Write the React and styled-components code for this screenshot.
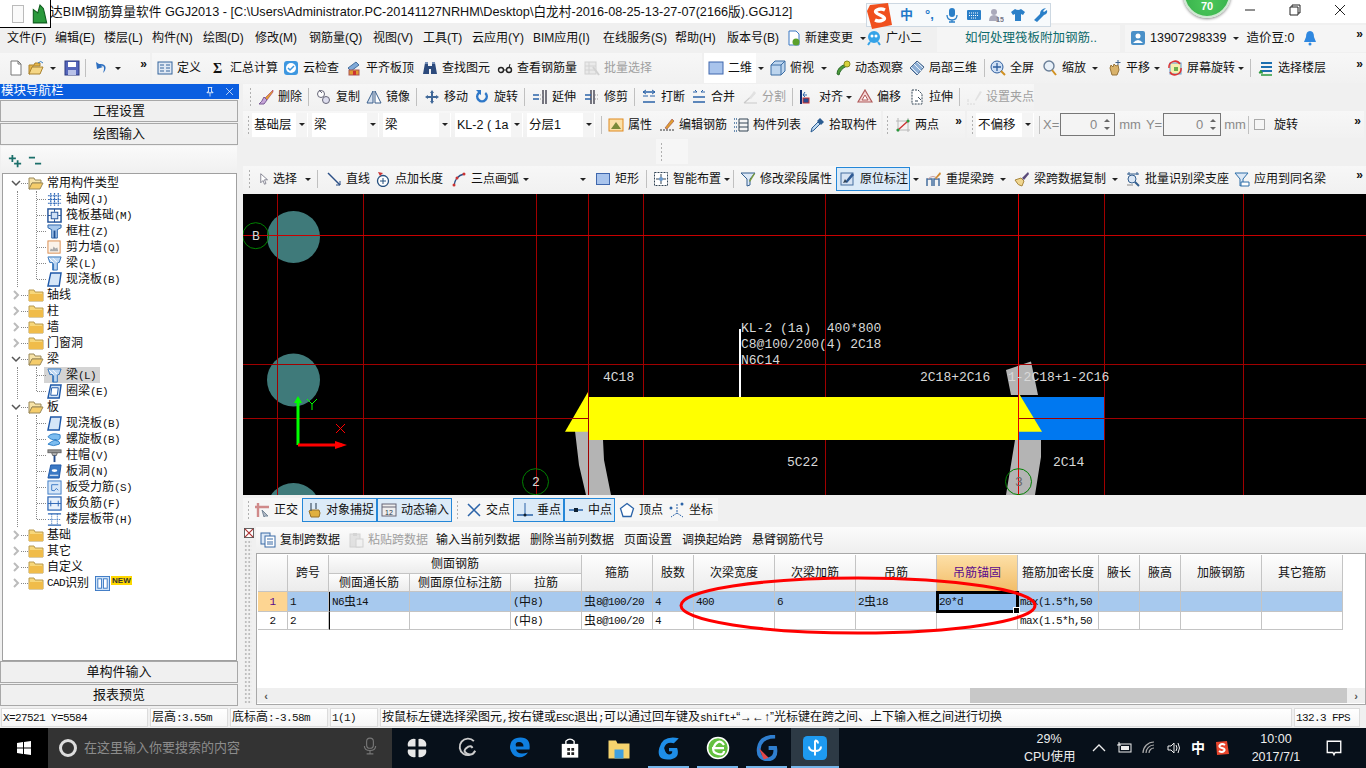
import React from "react";
import styled, { createGlobalStyle } from "styled-components";

const UI_FONT = `"Liberation Sans", "Noto Sans CJK SC", sans-serif`;
const MONO_FONT = `"Liberation Mono", "Noto Sans CJK SC", monospace`;

const GlobalStyle = createGlobalStyle`
  html, body { margin: 0; padding: 0; background: #f0f0f0; }
  * { box-sizing: border-box; }
`;

const Root = styled.div`
  position: relative;
  width: 1366px;
  height: 768px;
  overflow: hidden;
  display: flex;
  flex-direction: column;
  background: #f0f0f0;
  color: #111;
  font: 12px/16px ${UI_FONT};
  white-space: nowrap;
`;

/* ---------- icons ---------- */
const Svg = styled.svg`
  flex: none;
  width: ${p => p.$s || 16}px;
  height: ${p => p.$s || 16}px;
  opacity: ${p => (p.$off ? 0.45 : 1)};
  filter: ${p => (p.$off ? "grayscale(1)" : "none")};
`;

const ICONS = {
  new: <path d="M3 1h7l3 3v11H3z M10 1v3h3" fill="#fff" stroke="#777" />,
  open: <><path d="M1 5h5l1-2h5v3H5L2 14H1z" fill="#e8b74a" stroke="#a9822f" /><path d="M4 7h11l-3 7H1z" fill="#f5d685" stroke="#a9822f" /><path d="M10 3q3-3 5 0" stroke="#3a7fc0" fill="none" /></>,
  save: <><rect x="1" y="1" width="14" height="14" fill="#5566bb" stroke="#2c3a80" /><rect x="4" y="2" width="8" height="5" fill="#fff" /><rect x="4" y="10" width="8" height="5" fill="#b9c2e8" /></>,
  undo: <path d="M3 2l1 7 6-2-2-1c3-1 4 2 2 7 4-4 4-10-4-9z" fill="#2d6fc0" />,
  define: <><rect x="1" y="2" width="14" height="12" fill="#dfe8f4" stroke="#34649c" /><path d="M3 5h4M3 8h4M3 11h4M9 5h4M9 8h4M9 11h4" stroke="#34649c" /></>,
  sigma: <text x="3" y="13" fontSize="14" fontWeight="700" fontFamily="Liberation Serif" fill="#111">Σ</text>,
  cloud: <><rect x="1" y="1" width="14" height="14" rx="3" fill="#3d97e0" /><circle cx="8" cy="8" r="5" fill="#fff" /><path d="M5 8l2 2 4-4" fill="none" stroke="#3d97e0" strokeWidth="1.5" /></>,
  level: <><path d="M2 8l8-6 3 3-8 6z" fill="#7fa9d8" stroke="#46709f" /><rect x="3" y="10" width="10" height="5" fill="#e09a30" stroke="#a55" /><rect x="7" y="11" width="3" height="4" fill="#c33" /></>,
  binoc: <><path d="M3 3h3v3h4V3h3l2 11H9V9H7v5H1z" fill="#2c4a7c" /><rect x="3" y="2" width="3" height="2" fill="#7790b8" /><rect x="10" y="2" width="3" height="2" fill="#7790b8" /></>,
  rebar: <><circle cx="4" cy="10" r="2.5" fill="none" stroke="#222" strokeWidth="1.4" /><circle cx="12" cy="10" r="2.5" fill="none" stroke="#222" strokeWidth="1.4" /><path d="M6 10h4M12 8l1-4" stroke="#222" /></>,
  batch: <><rect x="1" y="2" width="11" height="12" fill="#ddd" stroke="#aaa" /><path d="M1 6h11M1 10h11M5 2v12" stroke="#aaa" /><path d="M9 7l6 8" stroke="#aaa" strokeWidth="2" /></>,
  square: <rect x="1" y="2" width="14" height="12" fill="#a9c4ec" stroke="#3f67ad" />,
  cube: <><path d="M5 1h10v10l-4 4H1V5z" fill="#bdd5ee" stroke="#3c6ea5" /><path d="M1 5h10v10M11 5l4-4" fill="none" stroke="#3c6ea5" /></>,
  orbit: <><path d="M2 14q0-7 9-10l1 2Q5 9 4 15z" fill="#4c9a3a" stroke="#2b6d2a" /><circle cx="12" cy="4" r="3" fill="#d7d33c" stroke="#8a8a20" /></>,
  local3d: <><path d="M8 1l7 6-7 8-7-7z" fill="#8fb0d6" stroke="#44648a" /><path d="M5 4l7 7M8 2l6 6M2 7l7 7" stroke="#e8f0f8" /></>,
  fit: <><circle cx="7" cy="7" r="6" fill="#cfe0f5" stroke="#2e5e9e" /><path d="M7 3v8M3 7h8" stroke="#2e5e9e" strokeWidth="1.3" /><path d="M11 11l4 4" stroke="#d09020" strokeWidth="2" /></>,
  zoom: <><circle cx="7" cy="6" r="5" fill="#e8f0f8" stroke="#6a7f98" strokeWidth="1.4" /><path d="M10 10l4 5" stroke="#d09020" strokeWidth="2" /></>,
  pan: <><path d="M4 8l1-3 2 2 1-3 2 2 2-1 1 5-2 5H6z" fill="#d9b26a" stroke="#97743a" /><path d="M12 0v5M9.500 2.500h5" stroke="#44648a" /></>,
  screen: <><rect x="3" y="3" width="11" height="11" fill="#f6efb0" stroke="#5c9ad0" /><path d="M2 8a6 6 0 0 1 11-4" fill="none" stroke="#d33" strokeWidth="1.5" /><path d="M14 8a6 6 0 0 1-11 4" fill="none" stroke="#d33" strokeWidth="1.5" /><rect x="7" y="7" width="4" height="4" fill="#6ab04c" /></>,
  floors: <><path d="M3 3h11M3 7h11M3 11h11" stroke="#1c6fb0" strokeWidth="2" /><path d="M5 13H1l2-3" fill="#2a9a3c" stroke="#2a9a3c" /><path d="M3 15h11" stroke="#2a9a3c" strokeWidth="1.5" /></>,
  erase: <><path d="M15 1L7 9l2 2 6-8z" fill="#e0a030" stroke="#916" strokeWidth=".5" /><path d="M6 8l3 3-3 4H1q3-2 5-7z" fill="#c6a6d8" stroke="#7a5a96" /></>,
  copy: <><circle cx="5" cy="5" r="3.5" fill="#fff" stroke="#667" /><circle cx="10" cy="11" r="3.5" fill="#dde" stroke="#667" /><path d="M3 1l3 3" stroke="#667" /></>,
  mirror: <><path d="M7 2v12H1z" fill="#d7e2f0" stroke="#3a5f8c" /><path d="M9 2v12h6z" fill="#fff" stroke="#3a5f8c" /></>,
  move: <path d="M8 1l2 3H9v3h3V6l3 2-3 2V9H9v3h1l-2 3-2-3h1V9H4v1L1 8l3-2v1h3V4H6z" fill="#3f6797" />,
  rotate: <path d="M4 3a6 6 0 1 0 8 0l-1.500 2a3.500 3.500 0 1 1-5 0l1.500 1V1H2z" fill="#2f78c8" />,
  extend: <><path d="M14 1v14M11 1v14" stroke="#223" strokeWidth="1.2" /><path d="M1 6h6M1 10h6" stroke="#2b63a8" strokeWidth="1.4" /><path d="M8 6h3M8 10h3" stroke="#999" strokeDasharray="1 1" /></>,
  trim: <><path d="M7 1v14M10 1v14" stroke="#223" strokeWidth="1.2" /><path d="M1 6h6M1 10h6" stroke="#2b63a8" strokeWidth="1.4" /><path d="M11 6h4M11 10h4" stroke="#999" strokeDasharray="1 1" /></>,
  breakk: <><path d="M2 3h12M2 13h12" stroke="#2b63a8" strokeWidth="1.4" /><path d="M2 7h5M9 7h5" stroke="#2b63a8" /><path d="M5 1L2 3l3 2M11 1l3 2-3 2" fill="none" stroke="#2b63a8" /></>,
  merge: <><path d="M2 8h12M2 13h12" stroke="#2b63a8" strokeWidth="1.4" /><path d="M2 3h4l-2-2M14 3h-4l2-2" fill="none" stroke="#2b63a8" /></>,
  split: <><path d="M2 14h13M2 14L13 4" stroke="#999" strokeWidth="1.2" /><path d="M7 9l5-7 2 2-5 6z" fill="#ccc" /></>,
  align: <><path d="M2 1v14" stroke="#122e70" strokeWidth="2" /><rect x="4" y="9" width="6" height="5" fill="#2a4a90" stroke="#c33" /><path d="M8 6H4l2-3M4 6l2 2" fill="none" stroke="#2b63a8" /></>,
  offset: <><path d="M8 1l7 12H1z" fill="#f5d8d8" stroke="#b05a5a" strokeWidth="1.2" /><path d="M8 6l3 5H5z" fill="#fff" stroke="#b05a5a" /></>,
  stretch: <><path d="M3 1h6l4 4v10H3z" fill="#fff" stroke="#345" strokeDasharray="2 1" /><path d="M9 8l3 3M6 12h3" stroke="#345" /></>,
  grip: <><path d="M1 15h8" stroke="#bbb" strokeDasharray="2 1" /><path d="M9 11l5-9 2 1-6 9z" fill="#ccc" /><path d="M2 10v3" stroke="#bbb" /></>,
  attr: <><rect x="1" y="2" width="14" height="12" fill="#fbe0a8" stroke="#e08a20" /><path d="M3 12l5-7 5 7z" fill="#7a8a3a" /></>,
  edit: <><path d="M1 13h14" stroke="#333" strokeDasharray="2 1" /><path d="M6 11l7-9 2 2-7 8z" fill="#e0a030" stroke="#944" strokeWidth=".6" /></>,
  list: <><path d="M6 2h9M6 6h9M6 10h9M6 14h9M6 2v12M15 2v12" stroke="#345" /><path d="M1 2h3M1 6h3M1 10h3M1 14h3" stroke="#6a8cb0" strokeDasharray="1 1" strokeWidth="2" /></>,
  pick: <><path d="M2 15l1-4 6-6 2 2-6 6z" fill="#bcd8f0" stroke="#2c5d92" /><path d="M8 4l3-3 4 4-3 3z" fill="#2c5d92" /></>,
  twopt: <><path d="M3 1v14M13 1v14M1 13h14M1 4h14" stroke="#b8b8b8" /><path d="M3 13L13 4" stroke="#c33" strokeWidth="1.4" /><circle cx="3" cy="13" r="1.500" fill="#2a9a3c" /><circle cx="13" cy="4" r="1.500" fill="#2a9a3c" /></>,
  cursor: <path d="M5 1v12l3-3 2 5 2-1-2-5h4z" fill="#fff" stroke="#667" />,
  line: <><path d="M2 2l12 12" stroke="#2b4f86" strokeWidth="1.4" /><path d="M14 14v-4M14 14h-4" stroke="#2b4f86" /></>,
  ptlen: <><circle cx="8" cy="10" r="5.500" fill="#fff" stroke="#25507f" strokeWidth="1.3" /><path d="M8 7v6M5 10h6" stroke="#25507f" /><path d="M3 1l2 4 3-3z" fill="#c33" /></>,
  arc: <><path d="M3 15Q4 5 13 3" fill="none" stroke="#2b4f86" strokeWidth="1.3" /><circle cx="3" cy="14" r="1.500" fill="#c33" /><circle cx="13" cy="3" r="1.500" fill="#c33" /><circle cx="6" cy="7" r="1.500" fill="#c33" /></>,
  rect: <rect x="1.500" y="2.500" width="13" height="11" fill="#a9c4ec" stroke="#3f67ad" />,
  smart: <><rect x="1.500" y="1.500" width="13" height="13" fill="#fff" stroke="#345" strokeDasharray="2 1" /><path d="M8 3v10M3 8h10" stroke="#345" /><circle cx="8" cy="8" r="2" fill="#6a9ad0" /></>,
  modify: <><path d="M1 2h14L10 8v6l-3 1V8z" fill="#dce8f6" stroke="#345f8f" /><path d="M9 10l5-8 1 1-5 8z" fill="#7a9a3a" /></>,
  origin: <><rect x="1" y="2" width="12" height="12" fill="#d6e3f3" stroke="#456f9f" /><path d="M5 11l7-9 2 2-7 8z" fill="#2d5a94" /><path d="M3 12l2-4 2 3z" fill="#345" /></>,
  relift: <><path d="M1 15V8h5v7M8 15V8h5v7" fill="none" stroke="#456f9f" strokeWidth="1.5" /><path d="M2 8q5-5 10 0" fill="none" stroke="#c9a0a0" /><path d="M9 7l5-6 1 2-5 5z" fill="#d08a30" /></>,
  brush: <><path d="M1 9l6-2 3 3-2 5q-4 0-7-6z" fill="#f0d690" stroke="#a8863c" /><path d="M8 7l6-6 1 2-5 6z" fill="#5a4a7a" /></>,
  batchId: <><circle cx="7" cy="8" r="4" fill="#dce8f6" stroke="#345f8f" /><path d="M2 3h12M4 1v3M12 1v3" stroke="#345f8f" /><path d="M10 11l4 4" stroke="#345f8f" strokeWidth="2" /><path d="M2 14h6" stroke="#888" /></>,
  apply: <><path d="M1 2h13l-5 6v6l-3 1V8z" fill="#dce8f6" stroke="#2f6fa8" /><path d="M7 11h8v4H7z" fill="#fff" stroke="#2f6fa8" /></>,
  ortho: <><path d="M1 5h14M4 1v14" stroke="#d08a8a" strokeWidth="2.400" /><path d="M8 8l6 6-3 0-1 1z" fill="#b0b8c4" stroke="#789" /></>,
  snap: <><path d="M3 9l2-1 8 0 1 3-1 4H5z" fill="#e0b040" stroke="#96702a" /><path d="M5 1v8M10 1v6" stroke="#456" strokeWidth="1.2" /></>,
  dyn: <><rect x="1" y="2" width="14" height="12" fill="#eee" stroke="#667" /><path d="M1 5h14" stroke="#667" /><text x="4" y="13" fontSize="7" fontFamily="Liberation Sans" fill="#234">12</text></>,
  inter: <path d="M2 2l12 12M14 2L2 14" stroke="#2b63a8" strokeWidth="1.500" />,
  perp: <><path d="M0 13h16" stroke="#2b63a8" strokeWidth="1.500" /><path d="M8 1v12" stroke="#2b63a8" /><circle cx="8" cy="13" r="1.500" fill="#123" /></>,
  mid: <><path d="M1 8h14" stroke="#2b63a8" strokeWidth="1.500" /><rect x="6" y="6" width="4" height="4" fill="#123" /></>,
  vertex: <path d="M8 1.500l6.500 5-2.500 8H4l-2.500-8z" fill="#fff" stroke="#2b63a8" strokeWidth="1.300" />,
  coord: <><path d="M8 2v9L2 15M8 11l6 4" stroke="#2b63a8" strokeDasharray="2 1" fill="none" /><circle cx="13" cy="2" r="1.500" fill="#2b63a8" /><circle cx="2" cy="6" r="1.500" fill="#2b63a8" /></>,
  copyPage: <><rect x="1" y="1" width="9" height="11" fill="#dce8f6" stroke="#3a6aa5" /><rect x="5" y="4" width="10" height="11" fill="#fff" stroke="#3a6aa5" /><path d="M7 7h6M7 10h6M7 12h6" stroke="#3a6aa5" /></>,
  paste: <><rect x="2" y="2" width="10" height="13" fill="#ccc" stroke="#aaa" /><rect x="5" y="1" width="4" height="3" fill="#aaa" /><rect x="8" y="7" width="7" height="8" fill="#eee" stroke="#aaa" /></>,
  axis: <path d="M4 1v14M8 1v14M12 1v14M1 4h14M1 8h14M1 12h14" stroke="#2f68b8" strokeWidth="1.300" strokeDasharray="2 .6" />,
  raft: <><rect x="1" y="1" width="14" height="14" fill="#fff" stroke="#1e4f96" strokeWidth="1.500" /><rect x="4.500" y="4.500" width="7" height="7" fill="#cfe0f5" stroke="#1e4f96" /><path d="M1 8h3M12 8h3M8 1v3M8 12v3" stroke="#1e4f96" /></>,
  column: <><path d="M1 1h14v3l-4 2v9H5V6L1 4z" fill="#a8c8ec" stroke="#2460a8" /><path d="M7 7h2v8H7z" fill="#1c4f94" /></>,
  wall: <><rect x="1" y="1" width="13" height="13" fill="#fbf3ea" stroke="#d9894a" /><path d="M3 12l1-3 2 1 1-3 2 2 2-1 1 4z" fill="#aaa" /></>,
  beam: <><path d="M1 1h14l-2 6h-2v8H6V7H3z" fill="#bcd6f2" stroke="#2f70b8" /><path d="M2 2l5 5M6 2l5 5" stroke="#fff" /><path d="M7 8v7" stroke="#2f70b8" /></>,
  slab: <path d="M4 1h11l-2 14H1z" fill="#d5e6f8" stroke="#1e58a8" strokeWidth="1.500" />,
  ring: <><path d="M4 1h11l-2 14H1z" fill="#d5e6f8" stroke="#1e58a8" strokeWidth="1.500" /><path d="M5 4h7l-1 8H4z" fill="#fff" stroke="#1e58a8" /></>,
  spiral: <path d="M14 3Q5 0 1 5q3 4 9 3-6 2-9 5 6 3 12 0 2-3-4-4 6 0 5-5z" fill="#7dbdf0" stroke="#2f80c8" />,
  cap: <><rect x="1" y="2" width="14" height="3" fill="#999" stroke="#666" /><path d="M5 5h6l-1 3H6z" fill="#b5b5b5" stroke="#666" /><rect x="7" y="8" width="2" height="7" fill="#234a8a" /></>,
  hole: <><path d="M4 1h11l-2 14H1z" fill="#3a78c4" stroke="#1e58a8" /><ellipse cx="8" cy="7" rx="3" ry="1.500" fill="#fff" /><path d="M3 12h9" stroke="#fff" /></>,
  force: <><rect x="1" y="1" width="14" height="14" fill="#d5e6f8" stroke="#3a78c4" /><path d="M5 5h7M5 5v6q3 2 5-2l2 2" fill="none" stroke="#3a78c4" /></>,
  neg: <><rect x="1" y="1" width="14" height="14" fill="#e6f0fb" stroke="#2a64b4" strokeWidth="1.300" /><path d="M1 8h14M4 5v6M12 5v6" stroke="#2a64b4" /></>,
  strip: <><path d="M1 2h14M1 14h14" stroke="#2a64b4" strokeWidth="1.500" /><path d="M5 2v12M11 2v12M1 8h14" stroke="#2a64b4" strokeDasharray="1 1" /></>,
  folder: <><path d="M1 3h5l1 2h8v9H1z" fill="#f7d77a" stroke="#b89a50" /><path d="M1 7h14v7H1z" fill="#f0bc4a" /></>,
  folderOpen: <><path d="M1 3h5l1 2h6v3H4l-2 6H1z" fill="#f7e3a8" stroke="#9a8858" /><path d="M4 8h11l-3 6H1z" fill="#f5cc6a" stroke="#9a8858" /></>,
  cadNew: <><rect x=".500" y=".500" width="15" height="15" fill="#cfe3f8" stroke="#3a78c4" /><rect x="3" y="3" width="4" height="10" fill="#fff" stroke="#3a78c4" /><rect x="9" y="3" width="4" height="10" fill="#fff" stroke="#3a78c4" /></>,
  newDoc: <><path d="M3 1h7l3 3v11H3z" fill="#fff" stroke="#3a78c4" /><circle cx="10" cy="12" r="3.500" fill="#5aa02c" /></>,
  robot: <><circle cx="8" cy="7" r="6" fill="#35a3e8" /><circle cx="6" cy="6" r="1.500" fill="#fff" /><circle cx="10" cy="6" r="1.500" fill="#fff" /><path d="M4 12l-2 3M12 12l2 3" stroke="#35a3e8" strokeWidth="2" /></>,
  user: <><rect x="1" y="1" width="14" height="14" rx="2" fill="#4a90c8" /><circle cx="8" cy="6" r="2.500" fill="#fff" /><path d="M3 13q5-6 10 0z" fill="#fff" /></>,
  bell: <><path d="M8 1q4 0 4 6l2 5H2l2-5q0-6 4-6z" fill="#2f88e0" /><circle cx="8" cy="14" r="1.500" fill="#2f88e0" /></>,
  pin: <path d="M5 2h6M6 2v6H4v1h8V8h-2V2M8 9v5" stroke="#fff" fill="#0b5ee0" />,
  cross: <path d="M3 3l10 10M13 3L3 13" stroke="#fff" />,
  plus: <path d="M5 1v8M1 5h8M11 7v8M7 11h8" stroke="#1b6f6a" strokeWidth="2" />,
  minus: <path d="M1 4h7M8 11h7" stroke="#1b6f6a" strokeWidth="2" />,
  close: <><rect x=".500" y=".500" width="10" height="10" fill="#fff" stroke="#555" /><path d="M1 1l9 9M10 1L1 10" stroke="#a33" strokeWidth="1.300" /></>,
  sogou: <><path d="M4 2l18-2 4 22-20 4L1 8z" fill="#f0501e" /><path d="M19 7q-4-2-8 0t3 5 3 5-8 0" fill="none" stroke="#fff" strokeWidth="3.400" /></>,
  trayS: <><path d="M2 2l11-1 2 13-12 1z" fill="#e8452c" /><path d="M11 5Q8 3 6 5t2 3 2 3-5 0" fill="none" stroke="#fff" strokeWidth="2" /></>,
  imeMic: <><rect x="5" y="1" width="6" height="9" rx="3" fill="#2a7fc8" /><path d="M3 8q0 5 5 5t5-5M8 13v2M5 15h6" fill="none" stroke="#2a7fc8" strokeWidth="1.300" /></>,
  imeKey: <><rect x="1" y="3" width="14" height="10" rx="1" fill="#2a7fc8" /><path d="M3 6h10M3 8.500h10M5 11h6" stroke="#fff" strokeDasharray="1 1" /></>,
  imeUser: <><circle cx="6" cy="5" r="3" fill="#aab" /><path d="M1 14q0-6 5-6t5 6z" fill="#aab" /><text x="8" y="15" fontSize="7" fontFamily="Liberation Sans" fill="#778">15</text></>,
  imeShirt: <path d="M5 2L1 5l2 3 2-1v7h6V7l2 1 2-3-4-3q-3 2-6 0z" fill="#2a7fc8" />,
  imeWrench: <path d="M14 1l-3 3 1 1 3-2q1 4-3 5L5 15l-3-2 6-6Q8 2 14 1z" fill="#2a7fc8" />,
  win: <path d="M1 3l6-1v5.500H1zM8 2l7-1v6.500H8zM1 8.500h6V14l-6-1zM8 8.500h7V15l-7-1z" fill="#fff" />,
  mic: <><rect x="5" y="1" width="6" height="9" rx="3" fill="none" stroke="#777" /><path d="M3 8q0 4 5 4t5-4M8 12v3M5 15h6" fill="none" stroke="#777" /></>,
  pinwheel: <path d="M7 2a4 4 0 0 0-5 5l5 0zM9 2a4 4 0 0 1 5 5H9zM7 14a4 4 0 0 1-5-5h5zM9 14a4 4 0 0 0 5-5H9z" fill="#e8e8e8" />,
  spiral2: <path d="M13 3A6 6 0 1 0 14 10Q12 14 8 12T9 7q2-1 3 1" fill="none" stroke="#ccc" strokeWidth="1.400" />,
  edge: <path d="M2 8q0-7 7-7t6 8H6q1 4 8 2-3 4-7 3T2 8zm4-1h5Q11 4 8 4T6 7z" fill="#0f7fe0" />,
  store: <><path d="M2 5h12v10H2z" fill="#fff" /><path d="M5 5V3q3-3 6 0v2" fill="none" stroke="#fff" /><path d="M6 8h2v2H6zM9 8h2v2H9zM6 11h2v2H6zM9 11h2v2H9z" fill="#222" /></>,
  explorer: <><path d="M1 3h5l1 2h8v10H1z" fill="#f5d36e" /><rect x="5" y="9" width="6" height="6" fill="#3fa0e0" /></>,
  gBlue: <path d="M14 2Q4 0 2 8t7 7q6-1 4-7H8v2h2q0 2-2 2T5 8q1-4 6-3z" fill="#1e8ee8" />,
  ieGreen: <><circle cx="8" cy="8" r="7" fill="#63c040" stroke="#fff" /><path d="M4 8h8M12 6q-2-3-4-2t-3 4 3 4 4-2" fill="none" stroke="#fff" strokeWidth="1.500" /></>,
  gRed: <><path d="M13 1Q4 1 3 8t6 7q5-1 4-7H9" fill="none" stroke="#2f7fd0" strokeWidth="2.400" /><path d="M3 8l6 6-3 1z" fill="#e2484a" /></>,
  appBlue: <><rect x="0" y="0" width="16" height="16" rx="3" fill="#1e9af0" /><path d="M8 3v10M4 7q0 3 4 3t4-3M8 3q2 0 2 2" fill="none" stroke="#fff" strokeWidth="1.300" /></>,
  battery: <><rect x="3" y="4" width="12" height="8" fill="none" stroke="#eee" /><rect x="5" y="6" width="8" height="4" fill="#eee" /><path d="M3 2v3M1 5h4" stroke="#eee" /></>,
  wifi: <path d="M2 13a11 11 0 0 1 11-11M5 13a8 8 0 0 1 8-8M8 13a5 5 0 0 1 5-5" fill="none" stroke="#aaa" strokeWidth="1.200" />,
  volume: <path d="M2 6h3l3-3v10l-3-3H2zM10 5q2 3 0 6M12 3q3 5 0 10" fill="none" stroke="#eee" />,
  notify: <path d="M2 2h12v10H9l-1 2-1-2H2z" fill="none" stroke="#fff" strokeWidth="1.200" />,
  chevUp: <path d="M2 11l6-6 6 6" fill="none" stroke="#eee" strokeWidth="1.300" />,
};

const Icon = ({ n, s, off, box = 16 }) => (
  <Svg viewBox={`0 0 ${box} ${box}`} $s={s} $off={off}>{ICONS[n]}</Svg>
);

/* ---------- title + menu ---------- */
const TitleBar = styled.div`
  position: relative;
  flex: none;
  height: 23px;
  padding-left: 50px;
  display: flex;
  align-items: center;
  background: #fff;
  font-size: 12.700px;
`;
const AppBadge = styled.div`
  position: absolute;
  left: 0;
  top: 0;
  width: 51px;
  height: 28px;
  background: #fff;
  border-right: 1px solid #000;
  border-bottom: 1px solid #000;
  display: flex;
  align-items: center;
  gap: 6px;
  padding-left: 12px;
  z-index: 3;
`;
const AppBadgePage = styled.div`
  width: 12px;
  height: 18px;
  border: 1px solid #bbb;
  background: #fafafa;
`;
const WinCtl = styled.div`
  position: absolute;
  top: 2px;
  right: 18px;
  display: flex;
  align-items: center;
  gap: 29px;
`;
const ScoreBall = styled.div`
  position: absolute;
  left: 1183px;
  top: -30px;
  width: 48px;
  height: 48px;
  border-radius: 50%;
  background: radial-gradient(circle at 50% 70%, #4cc85a, #2da544);
  border: 2px solid #cfe8d2;
  box-shadow: 0 1px 3px #888;
  color: #fff;
  font-weight: 700;
  font-size: 11px;
  line-height: 12px;
  display: flex;
  align-items: flex-end;
  justify-content: center;
  padding-bottom: 4px;
  z-index: 3;
`;
const ImeBar = styled.div`
  position: absolute;
  left: 866px;
  top: 3px;
  width: 185px;
  height: 24px;
  background: #f7fafc;
  border: 1px solid #cdd8e2;
  display: flex;
  align-items: center;
  gap: 6px;
  padding-left: 33px;
  color: #1f78c8;
  font-weight: 700;
  font-size: 13px;
  z-index: 3;
`;
const ImeLogo = styled.div`
  position: absolute;
  left: -1px;
  top: -1px;
`;
const ImePunct = styled.span`
  margin: 0 4px 0 6px;
`;

const MenuBar = styled.div`
  flex: none;
  height: 30px;
  display: flex;
  align-items: center;
  padding-left: 7px;
`;
const MenuItem = styled.div`
  width: ${p => p.$w}px;
  flex: none;
  display: flex;
  align-items: center;
  gap: ${p => p.$gap ?? 3}px;
`;
const TipPanel = styled.div`
  flex: none;
  width: 183px;
  height: 27px;
  margin-left: 7px;
  padding-left: 28px;
  background: #f5f5f5;
  color: #0d6b6b;
  font-size: 12.500px;
  display: flex;
  align-items: center;
`;
const UserPanel = styled.div`
  flex: none;
  margin-left: 5px;
  width: 241px;
  height: 27px;
  background: #f5f5f5;
  padding-left: 5px;
  display: flex;
  align-items: center;
  font-size: 12.500px;
`;
const PhoneNo = styled.span`
  margin-left: 4px;
`;
const BellWrap = styled.span`
  margin-left: 8px;
  display: flex;
`;
const More = styled.span`
  margin-left: auto;
  margin-right: 3px;
  margin-top: -8px;
  font-weight: 700;
  font-size: 12px;
  line-height: 12px;
`;

/* ---------- toolbars ---------- */
const ToolRow = styled.div`
  flex: none;
  display: flex;
  align-items: center;
  height: ${p => p.$h || 26}px;
  gap: ${p => p.$gap || 0}px;
  margin-top: ${p => p.$mt || 0}px;
`;
const Segment = styled.div`
  flex: none;
  display: flex;
  align-items: center;
  height: 100%;
  width: ${p => p.$w}px;
  padding-left: ${p => p.$pad || 0}px;
  background: linear-gradient(#f7f7f7, #f1f1f1);
`;
const Tool = styled.div`
  flex: none;
  width: ${p => p.$w}px;
  height: ${p => (p.$active ? "24px" : "100%")};
  display: flex;
  align-items: center;
  justify-content: flex-start;
  gap: 4px;
  padding-left: 4px;
  color: ${p => (p.$off ? "#a0a0a0" : "#111")};
  background: ${p => (p.$active ? "#dcebf8" : p.$white ? "#fff" : "transparent")};
  outline: ${p => (p.$active ? "1px solid #2487d8" : "none")};
  outline-offset: -1px;
`;
const ToolGap = styled.div`
  flex: none;
  width: ${p => p.$w}px;
`;
const Caret = styled.div`
  flex: none;
  width: ${p => p.$w || 14}px;
  display: flex;
  justify-content: center;
  &::before {
    content: "";
    border-top: 3px solid #222;
    border-left: 3px solid transparent;
    border-right: 3px solid transparent;
  }
`;
const Sep = styled.div`
  flex: none;
  width: 1px;
  height: 18px;
  background: #c0c0c0;
  margin: 0 ${p => p.$m ?? 3}px;
`;
const Grip = styled.div`
  flex: none;
  width: ${p => p.$w || 7}px;
  height: 18px;
  margin-left: ${p => p.$ml || 0}px;
  background-image: radial-gradient(#b0b0b0 40%, transparent 45%);
  background-size: 3px 4px;
  background-position: center;
  background-repeat: repeat-y;
`;
const Select = styled.div`
  flex: none;
  width: ${p => p.$w}px;
  height: 24px;
  margin-right: 4px;
  background: #fff;
  display: flex;
  align-items: center;
  justify-content: space-between;
  padding: 0 1px 0 2px;
  font-size: 12.500px;
`;
const SelectArrow = styled.div`
  width: 11px;
  height: 24px;
  background: #f4f4f4;
  display: flex;
  align-items: center;
  justify-content: center;
  &::before {
    content: "";
    border-top: 3px solid #222;
    border-left: 3px solid transparent;
    border-right: 3px solid transparent;
  }
`;
const Spin = styled.div`
  flex: none;
  width: ${p => p.$w}px;
  height: 23px;
  margin: 0 3px 0 1px;
  border: 1px solid #777;
  background: #f4f4f4;
  color: #888;
  font-size: 13px;
  display: flex;
  align-items: center;
  justify-content: flex-end;
  padding-right: 17px;
  position: relative;
  &::before, &::after {
    content: "";
    position: absolute;
    right: 4px;
    border-left: 3px solid transparent;
    border-right: 3px solid transparent;
  }
  &::before { top: 5px; border-bottom: 3px solid #666; }
  &::after { bottom: 5px; border-top: 3px solid #666; }
`;
const Dim = styled.span`
  color: #8a8a8a;
  font-size: 13px;
  flex: none;
  margin-left: ${p => p.$ml || 0}px;
`;
const CheckBox = styled.div`
  flex: none;
  width: 11px;
  height: 11px;
  margin: 0 9px 0 3px;
  border: 1px solid #aaa;
  background: #f6f6f6;
`;

const renderTools = items => items.map((it, i) => {
  if (it.sep !== undefined) return <Sep key={i} $m={it.sep} />;
  if (it.caret) return <Caret key={i} $w={it.caret} />;
  if (it.gap) return <ToolGap key={i} $w={it.gap} />;
  return (
    <Tool key={i} $w={it.w} $off={it.off} $active={it.active} $white={it.white}>
      {it.i && <Icon n={it.i} s={it.s} off={it.off} />}
      {it.t}
    </Tool>
  );
});

const TOP_A = [
  { i: "new", w: 20 }, { i: "open", w: 22 }, { caret: 14 }, { i: "save", w: 22 }, { sep: 3 },
  { i: "undo", w: 21 }, { caret: 15 },
];
const TOP_B = [
  { i: "define", t: "定义", w: 53 }, { i: "sigma", t: "汇总计算", w: 73 }, { i: "cloud", t: "云检查", w: 63 },
  { i: "level", t: "平齐板顶", w: 76 }, { i: "binoc", t: "查找图元", w: 75 }, { i: "rebar", t: "查看钢筋量", w: 87 },
  { i: "batch", t: "批量选择", w: 76, off: true },
];
const TOP_C = [
  { i: "square", t: "二维", w: 52, white: true }, { caret: 10 }, { i: "cube", t: "俯视", w: 50 }, { caret: 15 },
  { i: "orbit", t: "动态观察", w: 74 }, { i: "local3d", t: "局部三维", w: 78 }, { sep: 1 },
  { i: "fit", t: "全屏", w: 52 }, { i: "zoom", t: "缩放", w: 50 }, { caret: 14 }, { i: "pan", t: "平移", w: 49 }, { caret: 12 },
  { i: "screen", t: "屏幕旋转", w: 72 }, { caret: 12 }, { sep: 3 }, { i: "floors", t: "选择楼层", w: 76 },
];
const EDIT_TOOLS = [
  { i: "erase", t: "删除", w: 51 }, { sep: 3 }, { i: "copy", t: "复制", w: 50 }, { i: "mirror", t: "镜像", w: 51 }, { sep: 3 },
  { i: "move", t: "移动", w: 50 }, { i: "rotate", t: "旋转", w: 51 }, { sep: 3 }, { i: "extend", t: "延伸", w: 52 },
  { i: "trim", t: "修剪", w: 52 }, { sep: 2 }, { i: "breakk", t: "打断", w: 50 }, { i: "merge", t: "合并", w: 51 },
  { i: "split", t: "分割", w: 52, off: true }, { sep: 2 }, { i: "align", t: "对齐", w: 50 }, { caret: 8 },
  { i: "offset", t: "偏移", w: 52 }, { i: "stretch", t: "拉伸", w: 52 }, { sep: 2 }, { i: "grip", t: "设置夹点", w: 72, off: true },
];
const PROP_TOOLS = [
  { i: "attr", t: "属性", w: 51 }, { i: "edit", t: "编辑钢筋", w: 74 }, { i: "list", t: "构件列表", w: 76 }, { i: "pick", t: "拾取构件", w: 72 },
];
const DRAW_TOOLS = [
  { i: "cursor", t: "选择", w: 50, s: 12 }, { caret: 10 }, { sep: 4 }, { i: "line", t: "直线", w: 49 }, { i: "ptlen", t: "点加长度", w: 76 },
  { i: "arc", t: "三点画弧", w: 72 }, { caret: 14 }, { gap: 45 }, { caret: 10 }, { gap: 3 }, { i: "rect", t: "矩形", w: 53 }, { sep: 2 },
  { i: "smart", t: "智能布置", w: 74 }, { caret: 8 }, { sep: 2 }, { i: "modify", t: "修改梁段属性", w: 96 }, { gap: 4 },
  { i: "origin", t: "原位标注", w: 74, active: true }, { caret: 12 }, { i: "relift", t: "重提梁跨", w: 74 }, { caret: 14 },
  { i: "brush", t: "梁跨数据复制", w: 98 }, { caret: 13 }, { i: "batchId", t: "批量识别梁支座", w: 109 }, { i: "apply", t: "应用到同名梁", w: 100 },
];
const SNAP_A = [
  { i: "ortho", t: "正交", w: 52 }, { i: "snap", t: "对象捕捉", w: 75, active: true }, { i: "dyn", t: "动态输入", w: 75, active: true },
];
const SNAP_B = [
  { i: "inter", t: "交点", w: 51 }, { i: "perp", t: "垂点", w: 51, active: true }, { i: "mid", t: "中点", w: 51, active: true },
  { i: "vertex", t: "顶点", w: 50 }, { i: "coord", t: "坐标", w: 50 },
];
const GRID_TOOLS = [
  { i: "copyPage", t: "复制跨数据", w: 88 }, { i: "paste", t: "粘贴跨数据", w: 88, off: true }, { t: "输入当前列数据", w: 94 },
  { t: "删除当前列数据", w: 94 }, { t: "页面设置", w: 58 }, { t: "调换起始跨", w: 70 }, { t: "悬臂钢筋代号", w: 80 },
];

/* ---------- left panel ---------- */
const Body = styled.div`
  flex: none;
  height: 625px;
  display: flex;
`;
const NavPanel = styled.div`
  flex: none;
  width: 240px;
  padding: 1px 0 0;
  display: flex;
  flex-direction: column;
`;
const NavHead = styled.div`
  height: 15px;
  width: 239px;
  flex: none;
  background: #0b5ee0;
  color: #fff;
  padding: 0 4px 0 1px;
  display: flex;
  align-items: center;
  line-height: 15px;
  font-size: 12.500px;
`;
const NavHeadIcons = styled.div`
  margin-left: auto;
  display: flex;
  gap: 8px;
`;
const NavButton = styled.div`
  flex: none;
  width: 238px;
  height: 22px;
  margin: ${p => p.$top || 0}px 0 1px 0;
  border: 1px solid #a8a8a8;
  background: #f0f0f0;
  display: flex;
  align-items: center;
  justify-content: center;
  font-size: 13px;
`;
const TreeTools = styled.div`
  flex: none;
  width: 236px;
  height: 27px;
  margin-left: 1px;
  background: linear-gradient(#fafafa, #f0f0f0);
  display: flex;
  align-items: center;
  gap: 6px;
  padding: 3px 0 0 7px;
`;
const Tree = styled.div`
  flex: none;
  width: 235px;
  height: 488px;
  margin-left: 2px;
  border: 1px solid #a0a0a0;
  background: #fff;
  padding-top: 1px;
  font-size: 12px;
`;
const GroupRow = styled.div`
  height: 16px;
  display: flex;
  align-items: center;
  padding-left: 8px;
`;
const Chevron = styled.svg`
  flex: none;
  width: 10px;
  height: 10px;
`;
const Dots = styled.div`
  flex: none;
  width: 7px;
  height: 1px;
  border-top: 1px dotted #888;
`;
const GroupLabel = styled.span`
  margin-left: 3px;
  display: flex;
  align-items: center;
`;
const CadGap = styled.span`
  width: 6px;
`;
const Kids = styled.div`
  position: relative;
  &::before {
    content: "";
    position: absolute;
    left: 14px;
    top: 0;
    bottom: 0;
    border-left: 1px dotted #888;
  }
  &::after {
    content: "";
    position: absolute;
    left: 33px;
    top: 0;
    bottom: 8px;
    border-left: 1px dotted #888;
  }
`;
const KidRow = styled.div`
  position: relative;
  height: 16px;
  padding-left: 41px;
  display: flex;
  align-items: center;
  &::before {
    content: "";
    position: absolute;
    left: 34px;
    top: 8px;
    width: 9px;
    border-top: 1px dotted #888;
  }
`;
const KidInner = styled.div`
  height: 16px;
  padding: 0 4px 0 3px;
  display: flex;
  align-items: center;
  gap: 4px;
  background: ${p => (p.$sel ? "#d4d4d4" : "transparent")};
`;
const Ascii = styled.span`
  font-family: ${MONO_FONT};
  font-size: 11px;
  letter-spacing: -0.6px;
`;
const NewTag = styled.span`
  margin-left: 1px;
  margin-top: -6px;
  padding: 0 1px;
  background: #ffd800;
  color: #333;
  font-weight: 700;
  font-size: 8px;
  line-height: 9px;
`;

const Mixed = ({ children }) => (
  <>
    {String(children).split(/([\x20-\x7e]+)/).map((part, i) =>
      /^[\x20-\x7e]+$/.test(part) ? <Ascii key={i}>{part}</Ascii> : part
    )}
  </>
);

const TREE = [
  { t: "常用构件类型", open: true, kids: [["axis", "轴网(J)"], ["raft", "筏板基础(M)"], ["column", "框柱(Z)"], ["wall", "剪力墙(Q)"], ["beam", "梁(L)"], ["slab", "现浇板(B)"]] },
  { t: "轴线" }, { t: "柱" }, { t: "墙" }, { t: "门窗洞" },
  { t: "梁", open: true, kids: [["beam", "梁(L)", true], ["ring", "圈梁(E)"]] },
  { t: "板", open: true, kids: [["slab", "现浇板(B)"], ["spiral", "螺旋板(B)"], ["cap", "柱帽(V)"], ["hole", "板洞(N)"], ["force", "板受力筋(S)"], ["neg", "板负筋(F)"], ["strip", "楼层板带(H)"]] },
  { t: "基础" }, { t: "其它" }, { t: "自定义" }, { t: "CAD识别", cad: true },
];

/* ---------- right column ---------- */
const Work = styled.div`
  flex: none;
  width: 1126px;
  padding: 1px 0 0 3px;
  display: flex;
  flex-direction: column;
`;
const FloatBit = styled.div`
  flex: none;
  height: 25px;
  margin: 1px 0 2px;
  display: flex;
  align-items: center;
`;
const FloatPiece = styled.div`
  margin-left: 413px;
  width: 32px;
  height: 25px;
  background: #f6f6f6;
  display: flex;
  align-items: center;
  padding-left: 2px;
`;
const CanvasWrap = styled.div`
  flex: none;
  width: 1123px;
  height: 301px;
  margin-top: 2px;
  background: #000;
`;
const SnapBar = styled.div`
  flex: none;
  width: 475px;
  height: 23px;
  margin: 3px 0 6px;
  background: #f6f6f6;
  display: flex;
  align-items: center;
  padding-left: 3px;
`;
const LowerPane = styled.div`
  flex: none;
  height: 181px;
  margin-left: -3px;
  display: flex;
`;
const SideStrip = styled.div`
  flex: none;
  width: 16px;
  padding: 1px 0 3px 4px;
  display: flex;
  flex-direction: column;
  gap: 2px;
`;
const SideGrip = styled.div`
  flex: 1;
  width: 8px;
  background-image: radial-gradient(#bdbdbd 40%, transparent 45%);
  background-size: 3.500px 4px;
`;
const GridPane = styled.div`
  flex: none;
  width: 1110px;
  display: flex;
  flex-direction: column;
`;
const GridToolbar = styled.div`
  flex: none;
  height: 26px;
  display: flex;
  align-items: center;
  background: linear-gradient(#fbfbfb, #eeeeee);
`;
const GridBox = styled.div`
  flex: none;
  height: 152px;
  border: 1px solid #a8a8a8;
  background: #fff;
  display: flex;
  flex-direction: column;
`;
const Table = styled.div`
  flex: none;
  display: grid;
  grid-template-columns: 30px 41px 81px 101px 71px 71px 41px 81px 81px 81px 81px 81px 41px 41px 81px 81px;
  grid-template-rows: 19px 18px 20px 18px;
  margin: 1px 0 0 1px;
  width: 1085px;
  font-size: 12px;
`;
const Cell = styled.div`
  position: relative;
  grid-column: ${p => p.$col || "auto"};
  grid-row: ${p => p.$row || "auto"};
  border-right: 1px solid #c4c4c4;
  border-bottom: 1px solid #c4c4c4;
  display: flex;
  align-items: center;
  overflow: visible;
  padding-left: 2px;
  background: ${p => (p.$sel ? "#a7c9ee" : "#fff")};
  border-left: ${p => (p.$freeze ? "1px solid #000" : "none")};
`;
const HeadCell = styled(Cell)`
  justify-content: center;
  padding: 0;
  color: ${p => (p.$cur ? "#5a0a8c" : "#111")};
  background: ${p => (p.$cur
    ? "linear-gradient(#fde0a8, #f2bd68)"
    : "linear-gradient(#fdfdfd, #ececec)")};
`;
const RowHead = styled(Cell)`
  justify-content: center;
  padding: 0;
  color: ${p => (p.$sel ? "#5a0a8c" : "#111")};
  background: ${p => (p.$sel ? "#fdd592" : "#fff")};
`;
const ActiveCell = styled(Cell)`
  background: #8fbcee;
  outline: 3px solid #000;
  outline-offset: -2px;
  z-index: 1;
  &::after {
    content: "";
    position: absolute;
    right: -3px;
    bottom: -3px;
    width: 5px;
    height: 5px;
    background: #000;
    border: 1px solid #fff;
  }
`;
const GridBlank = styled.div`
  flex: 1;
`;
const HScroll = styled.div`
  flex: none;
  height: 15px;
  margin-bottom: 1px;
  background: #efefef;
  display: flex;
  align-items: center;
  color: #555;
  font-size: 11px;
  font-weight: 700;
`;
const ScrollEnd = styled.div`
  flex: none;
  width: 18px;
  text-align: center;
`;
const ScrollThumb = styled.div`
  flex: none;
  margin-left: 695px;
  width: 377px;
  height: 15px;
  background: #c8c8c8;
`;

const Ellipse = styled.svg`
  position: absolute;
  left: 670px;
  top: 570px;
  width: 380px;
  height: 70px;
  z-index: 4;
`;

/* ---------- status + taskbar ---------- */
const StatusBar = styled.div`
  flex: none;
  height: 20px;
  display: flex;
  gap: 2px;
  padding-left: 1px;
`;
const StatusCell = styled.div`
  flex: none;
  width: ${p => p.$w}px;
  height: 19px;
  border: 1px solid #dcdcdc;
  background: linear-gradient(#fff, #f6f6f6);
  padding-left: 1px;
  display: flex;
  align-items: center;
`;
const StatusText = styled.span`
  display: block;
`;
const Taskbar = styled.div`
  flex: none;
  height: 40px;
  background: #07101a;
  display: flex;
  align-items: center;
  color: #eee;
`;
const StartBtn = styled.div`
  flex: none;
  width: 48px;
  height: 40px;
  background: #000;
  display: flex;
  align-items: center;
  justify-content: center;
`;
const SearchBox = styled.div`
  flex: none;
  width: 344px;
  height: 40px;
  background: #333;
  color: #8c8c8c;
  font-size: 13px;
  display: flex;
  align-items: center;
  padding-left: 11px;
  gap: 7px;
`;
const Cortana = styled.div`
  flex: none;
  width: 18px;
  height: 18px;
  border: 3px solid #ddd;
  border-radius: 50%;
`;
const SearchMic = styled.div`
  margin-left: auto;
  margin-right: 13px;
`;
const TaskApp = styled.div`
  position: relative;
  flex: none;
  width: ${p => p.$w || 49}px;
  height: 40px;
  display: flex;
  align-items: center;
  justify-content: center;
  background: ${p => (p.$cur ? "#2d3a45" : "transparent")};
  &::after {
    content: "";
    display: ${p => (p.$run ? "block" : "none")};
    position: absolute;
    left: ${p => (p.$cur ? 0 : 4)}px;
    right: ${p => (p.$cur ? 0 : 4)}px;
    bottom: 0;
    height: 2px;
    background: #75b5ea;
  }
`;
const Tray = styled.div`
  flex: none;
  display: flex;
  align-items: center;
  margin-left: 185px;
  gap: 9px;
`;
const TwoLine = styled.div`
  flex: none;
  width: ${p => p.$w}px;
  margin: 0 ${p => p.$mr || 0}px 0 ${p => p.$ml || 0}px;
  text-align: center;
  font-size: 12.500px;
  line-height: 18px;
`;
const TrayGlyph = styled.span`
  font-size: 14px;
  font-weight: 700;
  color: #fff;
`;
const NotifyWrap = styled.span`
  margin-left: 13px;
  display: flex;
`;

/* ---------- canvas ---------- */
const CanvasSvg = styled.svg`
  display: block;
  text {
    white-space: pre;
    font-family: "Liberation Mono", monospace;
    font-size: 13px;
  }
`;
const CADText = ({ x, y, fill = "#d8d8d8", children }) => (
  <text x={x} y={y} fill={fill}>{children}</text>
);
const CanvasDrawing = () => (
  <CanvasSvg viewBox="243 194 1123 301" width="1123" height="301">
    <g fill="#3f7a7a">
      <ellipse cx="293.500" cy="237" rx="26.500" ry="26" />
      <ellipse cx="293.500" cy="380" rx="26.500" ry="26.500" />
      <ellipse cx="293.500" cy="509" rx="26.500" ry="26" />
    </g>
    <path d="M575 431h14l14 9 1 20 7 35h-25l-7-30z" fill="#b4b4b4" />
    <path d="M1006 370l25-8.500 7 33.500h-27zM1015 440h26v17l-6 38h-29z" fill="#b4b4b4" />
    <g stroke="#a00000" strokeWidth="1" shapeRendering="crispEdges">
      <path d="M243 418.500h1123M243 364.500h1123" />
      <path d="M277.500 194v301M363.500 194v301M536.500 194v301M588.500 194v301M643.500 194v301M825.500 194v301M1104.500 194v301M1243.500 194v301" />
      <path d="M243 235.500h1123" stroke="#c80000" />
    </g>
    <rect x="1018" y="397" width="86" height="43" fill="#0078f0" />
    <path d="M1018 392l24 39.700h-24z" fill="#ff0" />
    <path d="M588 392l-23 39.700h23z" fill="#ff0" />
    <path d="M565 418.500h23M1018 418.500h86" stroke="#a00000" shapeRendering="crispEdges" />
    <path d="M1018.500 194v301" stroke="#e00000" shapeRendering="crispEdges" strokeWidth="1" />
    <rect x="589" y="397" width="429" height="43" fill="#ff0" />
    <path d="M740 329v68" stroke="#fff" strokeWidth="2" />
    <CADText x="741" y="332">KL-2 (1a)  400*800</CADText>
    <CADText x="741" y="348">C8@100/200(4) 2C18</CADText>
    <CADText x="741" y="364">N6C14</CADText>
    <CADText x="603" y="381">4C18</CADText>
    <CADText x="920" y="381">2C18+2C16</CADText>
    <CADText x="1008" y="381">1-2C18+1-2C16</CADText>
    <CADText x="787" y="466">5C22</CADText>
    <CADText x="1053" y="466">2C14</CADText>
    <g fill="none" stroke="#008000">
      <circle cx="255.700" cy="235.700" r="13" />
      <circle cx="535.500" cy="481.700" r="13" />
      <circle cx="1018.500" cy="481.700" r="13" />
    </g>
    <CADText x="252" y="240">B</CADText>
    <CADText x="532" y="486">2</CADText>
    <CADText x="1015" y="486" fill="#666">3</CADText>
    <path d="M298 445v-44" stroke="#0f0" strokeWidth="3" />
    <path d="M294 403l4-7 4 7z" fill="#0f0" />
    <path d="M298 445h44" stroke="#f00" strokeWidth="3" />
    <path d="M335 441l12 4-12 4z" fill="#f00" />
    <path d="M307 399l5 5 5-5M312 404v6" fill="none" stroke="#0f0" />
    <path d="M336 424l9 9M345 424l-9 9" fill="none" stroke="#f00" />
  </CanvasSvg>
);

function PropRow() {
  return (
    <ToolRow $h={27} $gap={2} $mt={1}>
      <Segment $w={638} $pad={2}>
        <Grip />
        <Select $w={56}>基础层<SelectArrow /></Select>
        <Select $w={67}>梁<SelectArrow /></Select>
        <Select $w={68}>梁<SelectArrow /></Select>
        <Select $w={68}>KL-2 ( 1a<SelectArrow /></Select>
        <Select $w={68}>分层1<SelectArrow /></Select>
        <Sep $m={2} />
        {renderTools(PROP_TOOLS)}
      </Segment>
      <Segment $w={82} $pad={1}>
        <Grip />
        {renderTools([{ i: "twopt", t: "两点", w: 48 }])}
        <More>»</More>
      </Segment>
      <Segment $w={397} $pad={2}>
        <Grip />
        <Select $w={58}>不偏移<SelectArrow /></Select>
        <Sep $m={1} />
        <Dim $ml={2}>X=</Dim>
        <Spin $w={55}>0</Spin>
        <Dim $ml={1}>mm</Dim>
        <Dim $ml={5}>Y=</Dim>
        <Spin $w={58}>0</Spin>
        <Dim>mm</Dim>
        <Sep $m={2} />
        <CheckBox />
        旋转
        <More>»</More>
      </Segment>
    </ToolRow>
  );
}

const BAR = "(中8)";
const STIRRUP = "虫8@100/20";

export default function App() {
  return (
    <Root>
      <GlobalStyle />
      <TitleBar>
        <AppBadge>
          <AppBadgePage />
          <Svg viewBox="0 0 14 18" $s={20}><path d="M1 17V5l4 3 2-7 3 3 1 4 2 9z" fill="#2a9a3c" stroke="#115f1f" /></Svg>
        </AppBadge>
        达BIM钢筋算量软件 GGJ2013 - [C:\Users\Administrator.PC-20141127NRHM\Desktop\白龙村-2016-08-25-13-27-07(2166版).GGJ12]
        <ImeBar>
          <ImeLogo><Icon n="sogou" s={28} box={28} /></ImeLogo>
          中<ImePunct>°,</ImePunct>
          <Icon n="imeMic" /><Icon n="imeKey" /><Icon n="imeUser" /><Icon n="imeShirt" /><Icon n="imeWrench" />
        </ImeBar>
        <ScoreBall>70</ScoreBall>
        <WinCtl>
          <Svg viewBox="0 0 16 16" $s={16}><path d="M3 8h10" stroke="#222" /></Svg>
          <Svg viewBox="0 0 16 16" $s={16}><path d="M3 5h8v8H3zM5 5V3h8v8h-2" fill="none" stroke="#222" /></Svg>
          <Svg viewBox="0 0 16 16" $s={16}><path d="M3 3l10 10M13 3L3 13" stroke="#222" /></Svg>
        </WinCtl>
      </TitleBar>

      <MenuBar>
        {[["文件(F)", 48], ["编辑(E)", 49], ["楼层(L)", 48], ["构件(N)", 51], ["绘图(D)", 52], ["修改(M)", 54], ["钢筋量(Q)", 64], ["视图(V)", 50], ["工具(T)", 49], ["云应用(Y)", 61], ["BIM应用(I)", 70], ["在线服务(S)", 72], ["帮助(H)", 52], ["版本号(B)", 59]].map(([t, w]) => (
          <MenuItem key={t} $w={w}>{t}</MenuItem>
        ))}
        <MenuItem $w={80}><Icon n="newDoc" />新建变更<Caret $w={14} /></MenuItem>
        <MenuItem $w={64} $gap={4}><Icon n="robot" />广小二</MenuItem>
        <TipPanel>如何处理筏板附加钢筋..</TipPanel>
        <UserPanel>
          <Icon n="user" />
          <PhoneNo>13907298339</PhoneNo>
          <Caret $w={20} />
          <span>造价豆:0</span>
          <BellWrap><Icon n="bell" /></BellWrap>
          <More>»</More>
        </UserPanel>
      </MenuBar>

      <ToolRow $h={30} $gap={2}>
        <Segment $w={150} $pad={4}>{renderTools(TOP_A)}<More>»</More></Segment>
        <Segment $w={550} $pad={1}>{renderTools(TOP_B)}</Segment>
        <Segment $w={662}>{renderTools(TOP_C)}<More>»</More></Segment>
      </ToolRow>

      <Body>
        <NavPanel>
          <NavHead>
            模块导航栏
            <NavHeadIcons><Icon n="pin" s={12} /><Icon n="cross" s={11} /></NavHeadIcons>
          </NavHead>
          <NavButton $top={1}>工程设置</NavButton>
          <NavButton>绘图输入</NavButton>
          <TreeTools><Icon n="plus" s={14} /><Icon n="minus" s={14} /></TreeTools>
          <Tree>
            {TREE.map(g => (
              <div key={g.t}>
                <GroupRow>
                  <Chevron viewBox="0 0 10 10">
                    {g.open
                      ? <path d="M1 3l4 4 4-4" fill="none" stroke="#555" strokeWidth="1.500" />
                      : <path d="M3 1l4 4-4 4" fill="none" stroke="#bbb" strokeWidth="2" />}
                  </Chevron>
                  <Dots />
                  <Icon n={g.open ? "folderOpen" : "folder"} />
                  <GroupLabel>
                    <Mixed>{g.t}</Mixed>
                    {g.cad && <><CadGap /><Icon n="cadNew" s={15} /><NewTag>NEW</NewTag></>}
                  </GroupLabel>
                </GroupRow>
                {g.kids && (
                  <Kids>
                    {g.kids.map(([ic, t, sel]) => (
                      <KidRow key={t}>
                        <KidInner $sel={sel}><Icon n={ic} s={15} /><span><Mixed>{t}</Mixed></span></KidInner>
                      </KidRow>
                    ))}
                  </Kids>
                )}
              </div>
            ))}
          </Tree>
          <NavButton>单构件输入</NavButton>
          <NavButton>报表预览</NavButton>
        </NavPanel>

        <Work>
          <ToolRow>
            <Segment $w={791} $pad={4}><Grip />{renderTools(EDIT_TOOLS)}</Segment>
          </ToolRow>
          <PropRow />
          <FloatBit><FloatPiece><Grip /></FloatPiece></FloatBit>
          <ToolRow>
            <Segment $w={1123} $pad={2}>
              <Grip $ml={1} />
              {renderTools(DRAW_TOOLS)}
              <More>»</More>
            </Segment>
          </ToolRow>
          <CanvasWrap><CanvasDrawing /></CanvasWrap>
          <SnapBar>
            <Grip $w={4} />
            {renderTools(SNAP_A)}
            <Grip $w={10} />
            {renderTools(SNAP_B)}
          </SnapBar>
          <LowerPane>
            <SideStrip>
              <Icon n="close" s={10} box={11} />
              <SideGrip />
            </SideStrip>
            <GridPane>
              <GridToolbar>{renderTools(GRID_TOOLS)}</GridToolbar>
              <GridBox>
                <Table>
                  <HeadCell $row="1 / 3" $col="1" />
                  <HeadCell $row="1 / 3" $col="2">跨号</HeadCell>
                  <HeadCell $col="3 / 6" $row="1">侧面钢筋</HeadCell>
                  {["箍筋", "肢数", "次梁宽度", "次梁加筋", "吊筋"].map((t, i) => (
                    <HeadCell key={t} $row="1 / 3" $col={6 + i}>{t}</HeadCell>
                  ))}
                  <HeadCell $row="1 / 3" $col="11" $cur>吊筋锚固</HeadCell>
                  {["箍筋加密长度", "腋长", "腋高", "加腋钢筋", "其它箍筋"].map((t, i) => (
                    <HeadCell key={t} $row="1 / 3" $col={12 + i}>{t}</HeadCell>
                  ))}
                  <HeadCell $row="2" $col="3">侧面通长筋</HeadCell>
                  <HeadCell $row="2" $col="4">侧面原位标注筋</HeadCell>
                  <HeadCell $row="2" $col="5">拉筋</HeadCell>

                  <RowHead $row="3" $col="1" $sel><Ascii>1</Ascii></RowHead>
                  <Cell $sel><Ascii>1</Ascii></Cell>
                  <Cell $sel $freeze><Mixed>N6虫14</Mixed></Cell>
                  <Cell $sel />
                  <Cell $sel><Mixed>{BAR}</Mixed></Cell>
                  <Cell $sel><Mixed>{STIRRUP}</Mixed></Cell>
                  <Cell $sel><Ascii>4</Ascii></Cell>
                  <Cell $sel><Ascii>400</Ascii></Cell>
                  <Cell $sel><Ascii>6</Ascii></Cell>
                  <Cell $sel><Mixed>2虫18</Mixed></Cell>
                  <ActiveCell $sel><Ascii>20*d</Ascii></ActiveCell>
                  <Cell $sel><Ascii>max(1.5*h,50</Ascii></Cell>
                  <Cell $sel /><Cell $sel /><Cell $sel /><Cell $sel />

                  <RowHead $row="4" $col="1"><Ascii>2</Ascii></RowHead>
                  <Cell><Ascii>2</Ascii></Cell>
                  <Cell $freeze />
                  <Cell />
                  <Cell><Mixed>{BAR}</Mixed></Cell>
                  <Cell><Mixed>{STIRRUP}</Mixed></Cell>
                  <Cell><Ascii>4</Ascii></Cell>
                  <Cell /><Cell /><Cell /><Cell />
                  <Cell><Ascii>max(1.5*h,50</Ascii></Cell>
                  <Cell /><Cell /><Cell /><Cell />
                </Table>
                <GridBlank />
                <HScroll>
                  <ScrollEnd>‹</ScrollEnd>
                  <ScrollThumb />
                  <ScrollEnd>›</ScrollEnd>
                </HScroll>
              </GridBox>
            </GridPane>
          </LowerPane>
        </Work>
      </Body>

      <StatusBar>
        <StatusCell $w={147}><Ascii>X=27521 Y=5584</Ascii></StatusCell>
        <StatusCell $w={78}><StatusText><Mixed>层高:3.55m</Mixed></StatusText></StatusCell>
        <StatusCell $w={98}><StatusText><Mixed>底标高:-3.58m</Mixed></StatusText></StatusCell>
        <StatusCell $w={48}><Ascii>1(1)</Ascii></StatusCell>
        <StatusCell $w={912}><StatusText><Mixed>按鼠标左键选择梁图元,按右键或ESC退出;可以通过回车键及shift+“→←↑”光标键在跨之间、上下输入框之间进行切换</Mixed></StatusText></StatusCell>
        <StatusCell $w={66}><Ascii>132.3 FPS</Ascii></StatusCell>
      </StatusBar>

      <Taskbar>
        <StartBtn><Icon n="win" s={16} /></StartBtn>
        <SearchBox>
          <Cortana />
          在这里输入你要搜索的内容
          <SearchMic><Icon n="mic" s={18} /></SearchMic>
        </SearchBox>
        <TaskApp $w={50}><Icon n="pinwheel" s={24} /></TaskApp>
        <TaskApp $w={50}><Icon n="spiral2" s={22} /></TaskApp>
        <TaskApp $w={54}><Icon n="edge" s={24} /></TaskApp>
        <TaskApp $w={48}><Icon n="store" s={22} /></TaskApp>
        <TaskApp $w={50}><Icon n="explorer" s={24} /></TaskApp>
        <TaskApp $run><Icon n="gBlue" s={26} /></TaskApp>
        <TaskApp $run><Icon n="ieGreen" s={24} /></TaskApp>
        <TaskApp $run><Icon n="gRed" s={26} /></TaskApp>
        <TaskApp $run $cur $w={48}><Icon n="appBlue" s={24} /></TaskApp>
        <Tray>
          <TwoLine $w={50} $mr={8}>29%<br />CPU使用</TwoLine>
          <Icon n="chevUp" s={16} />
          <Icon n="battery" s={16} />
          <Icon n="wifi" s={16} />
          <Icon n="volume" s={16} />
          <TrayGlyph>中</TrayGlyph>
          <Icon n="trayS" s={16} />
          <TwoLine $w={54} $ml={10}>10:00<br />2017/7/1</TwoLine>
          <NotifyWrap><Icon n="notify" s={18} /></NotifyWrap>
        </Tray>
      </Taskbar>

      <Ellipse viewBox="670 570 380 70">
        <ellipse cx="858" cy="605.500" rx="177" ry="27.500" fill="none" stroke="#f00" strokeWidth="3" />
      </Ellipse>
    </Root>
  );
}
